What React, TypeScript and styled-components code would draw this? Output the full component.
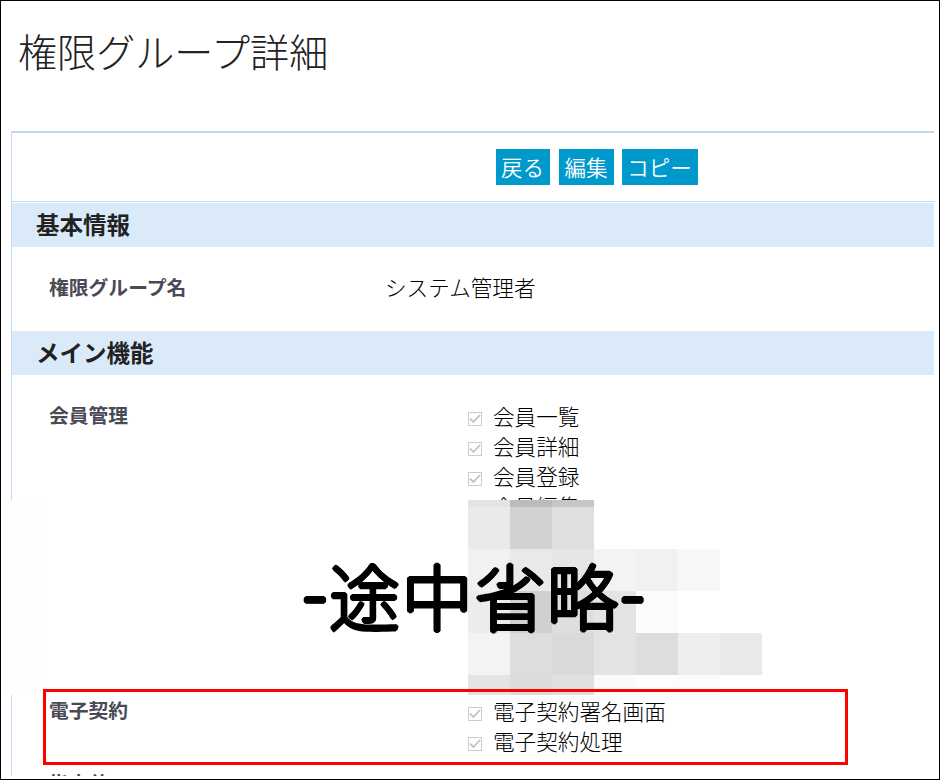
import styled, { createGlobalStyle } from 'styled-components'

const GlobalStyle = createGlobalStyle`
  * {
    box-sizing: border-box;
  }
  body {
    margin: 0;
    background: #fff;
    font-family: 'Noto Sans CJK JP', 'Noto Sans', sans-serif;
    font-weight: 300;
    color: #000;
  }
`
const Page = styled.div`
  position: relative;
  width: 940px;
  height: 780px;
  padding: 0 5px 3px 10px;
  border: 1px solid #000;
  overflow: hidden;
`
const Title = styled.h1`
  height: 130px;
  margin: 0;
  padding: 20px 0 0 7px;
  font-size: 39.1px;
  font-weight: 300;
  line-height: 58px;
  color: #222;
`
const Panel = styled.div`
  height: 645px;
  border-top: 2px solid #c1d9f3;
  border-left: 1px solid #c5d9f7;
  overflow: hidden;
`
const Toolbar = styled.div`
  display: flex;
  column-gap: 9px;
  height: 69px;
  padding: 16px 0 0 484px;
  border-bottom: 1px solid #c1dbee;
`
const Button = styled.button<{ $width: number }>`
  width: ${(props) => props.$width}px;
  height: 36px;
  padding: 0 1px 0 0;
  border: 0;
  background: #0099cc;
  color: #fff;
  font: inherit;
  font-size: 21.5px;
  font-weight: 350;
  line-height: 36px;
  white-space: nowrap;

  &:last-child {
    margin-left: -1px;
  }
`
const SectionTitle = styled.h2<{ $first?: boolean }>`
  height: 44px;
  margin: ${(props) => (props.$first ? '1px' : '0')} 0 0;
  padding-left: 24px;
  background: #dbeaf9;
  color: #222;
  font-size: 23.5px;
  font-weight: 700;
  line-height: 42px;
`
const Row = styled.div<{ $height: number; $top?: number }>`
  display: flex;
  height: ${(props) => props.$height}px;
  padding: ${(props) => props.$top ?? 25}px 0 0 37px;
`
const Label = styled.div`
  flex: 0 0 336px;
  color: #4a4a56;
  font-size: 19.8px;
  font-weight: 700;
  line-height: 30px;
`
const Value = styled.div`
  font-size: 21.6px;
  line-height: 30px;
`
const CheckList = styled.ul`
  margin: 1px 0 0;
  padding: 0 0 0 83px;
  list-style: none;
`
const CheckItem = styled.li`
  display: flex;
  align-items: center;
  column-gap: 11px;
  height: 30px;
  font-size: 21.6px;
  line-height: 30px;

  svg {
    margin-top: 5px;
  }
`
const Omitted = styled.div`
  position: absolute;
  top: 499px;
  left: 1px;
  width: 930px;
  height: 195px;
  background: linear-gradient(90deg, #fdfeff 46px, #fff 46px);
`
const Mosaic = styled.div`
  display: grid;
  grid-template-columns: repeat(7, 42px);
  grid-template-rows: 7px repeat(4, 42px) 20px;
  margin-left: 466px;
`
const Tile = styled.div<{ $color: string }>`
  background: ${(props) => props.$color};
`
const Note = styled.div`
  position: absolute;
  top: 541px;
  left: 301px;
  font-size: 71.5px;
  font-weight: 300;
  letter-spacing: 1.2px;
  line-height: 100px;
  white-space: nowrap;
  /* rounds off the stroke ends */
  text-shadow:
    1.7px 0 #000,
    -1.7px 0 #000,
    0 1.7px #000,
    0 -1.7px #000,
    1.2px 1.2px #000,
    -1.2px 1.2px #000,
    1.2px -1.2px #000,
    -1.2px -1.2px #000;
`
const Dash = styled.span`
  position: relative;
  top: -4px;
  font-size: 77px;
`
const Highlight = styled.div`
  position: absolute;
  top: 688px;
  left: 42px;
  width: 805px;
  height: 76px;
  border: 3px solid #f00;
`

// rows of the pixelated block, an empty string is a clear tile
const tiles = [
  ['#e3e3e3', '#bbbbbb', '#c6c6c6', '', '', '', ''],
  ['#ebe9ea', '#d2d2d2', '#dfdfdf', '', '', '', ''],
  ['#f1f1f1', '#e9e9e9', '#e5e5e4', '#f3f3f3', '#f1f1f1', '#f8f8f8', ''],
  ['#ececec', '#d0d0d1', '#dedede', '#e3e5e4', '#fcfcfc', '', ''],
  ['#f3f3f2', '#dddde0', '#d9d9d9', '#e3e3e3', '#dddddd', '#efedee', '#e8eae9'],
  ['#e3e3e3', '#dcdcdd', '#dfe0df', '#fafafa', '#fdfdfd', '#fbfbfb', '']
]

const CheckIcon = () => (
  <svg width="14" height="14" viewBox="0 0 14 14" fill="none">
    <rect x="0.5" y="0.5" width="13" height="13" stroke="#ccc" />
    <path d="M2 6.6 5.4 10 12 3" stroke="#c2c2c2" strokeWidth="1.8" />
  </svg>
)

const Checks = ({ items }: { items: string[] }) => (
  <CheckList>
    {items.map((item) => (
      <CheckItem key={item}>
        <CheckIcon />
        {item}
      </CheckItem>
    ))}
  </CheckList>
)

const App = () => {
  return (
    <Page>
      <GlobalStyle />
      <Title>権限グループ詳細</Title>
      <Panel>
        <Toolbar>
          <Button $width={54}>戻る</Button>
          <Button $width={55}>編集</Button>
          <Button $width={76}>コピー</Button>
        </Toolbar>
        <SectionTitle $first>基本情報</SectionTitle>
        <Row $height={84}>
          <Label>権限グループ名</Label>
          <Value>システム管理者</Value>
        </Row>
        <SectionTitle>メイン機能</SectionTitle>
        <Row $height={295}>
          <Label>会員管理</Label>
          <Checks items={['会員一覧', '会員詳細', '会員登録', '会員編集']} />
        </Row>
        <Row $height={75}>
          <Label>電子契約</Label>
          <Checks items={['電子契約署名画面', '電子契約処理']} />
        </Row>
        <Row $height={75} $top={23}>
          <Label>指定義</Label>
        </Row>
      </Panel>
      <Omitted>
        <Mosaic>
          {tiles.flat().map((color, i) => (
            <Tile key={i} $color={color || 'transparent'} />
          ))}
        </Mosaic>
      </Omitted>
      <Highlight />
      <Note>
        <Dash>-</Dash>途中省略<Dash>-</Dash>
      </Note>
    </Page>
  )
}
export default App
